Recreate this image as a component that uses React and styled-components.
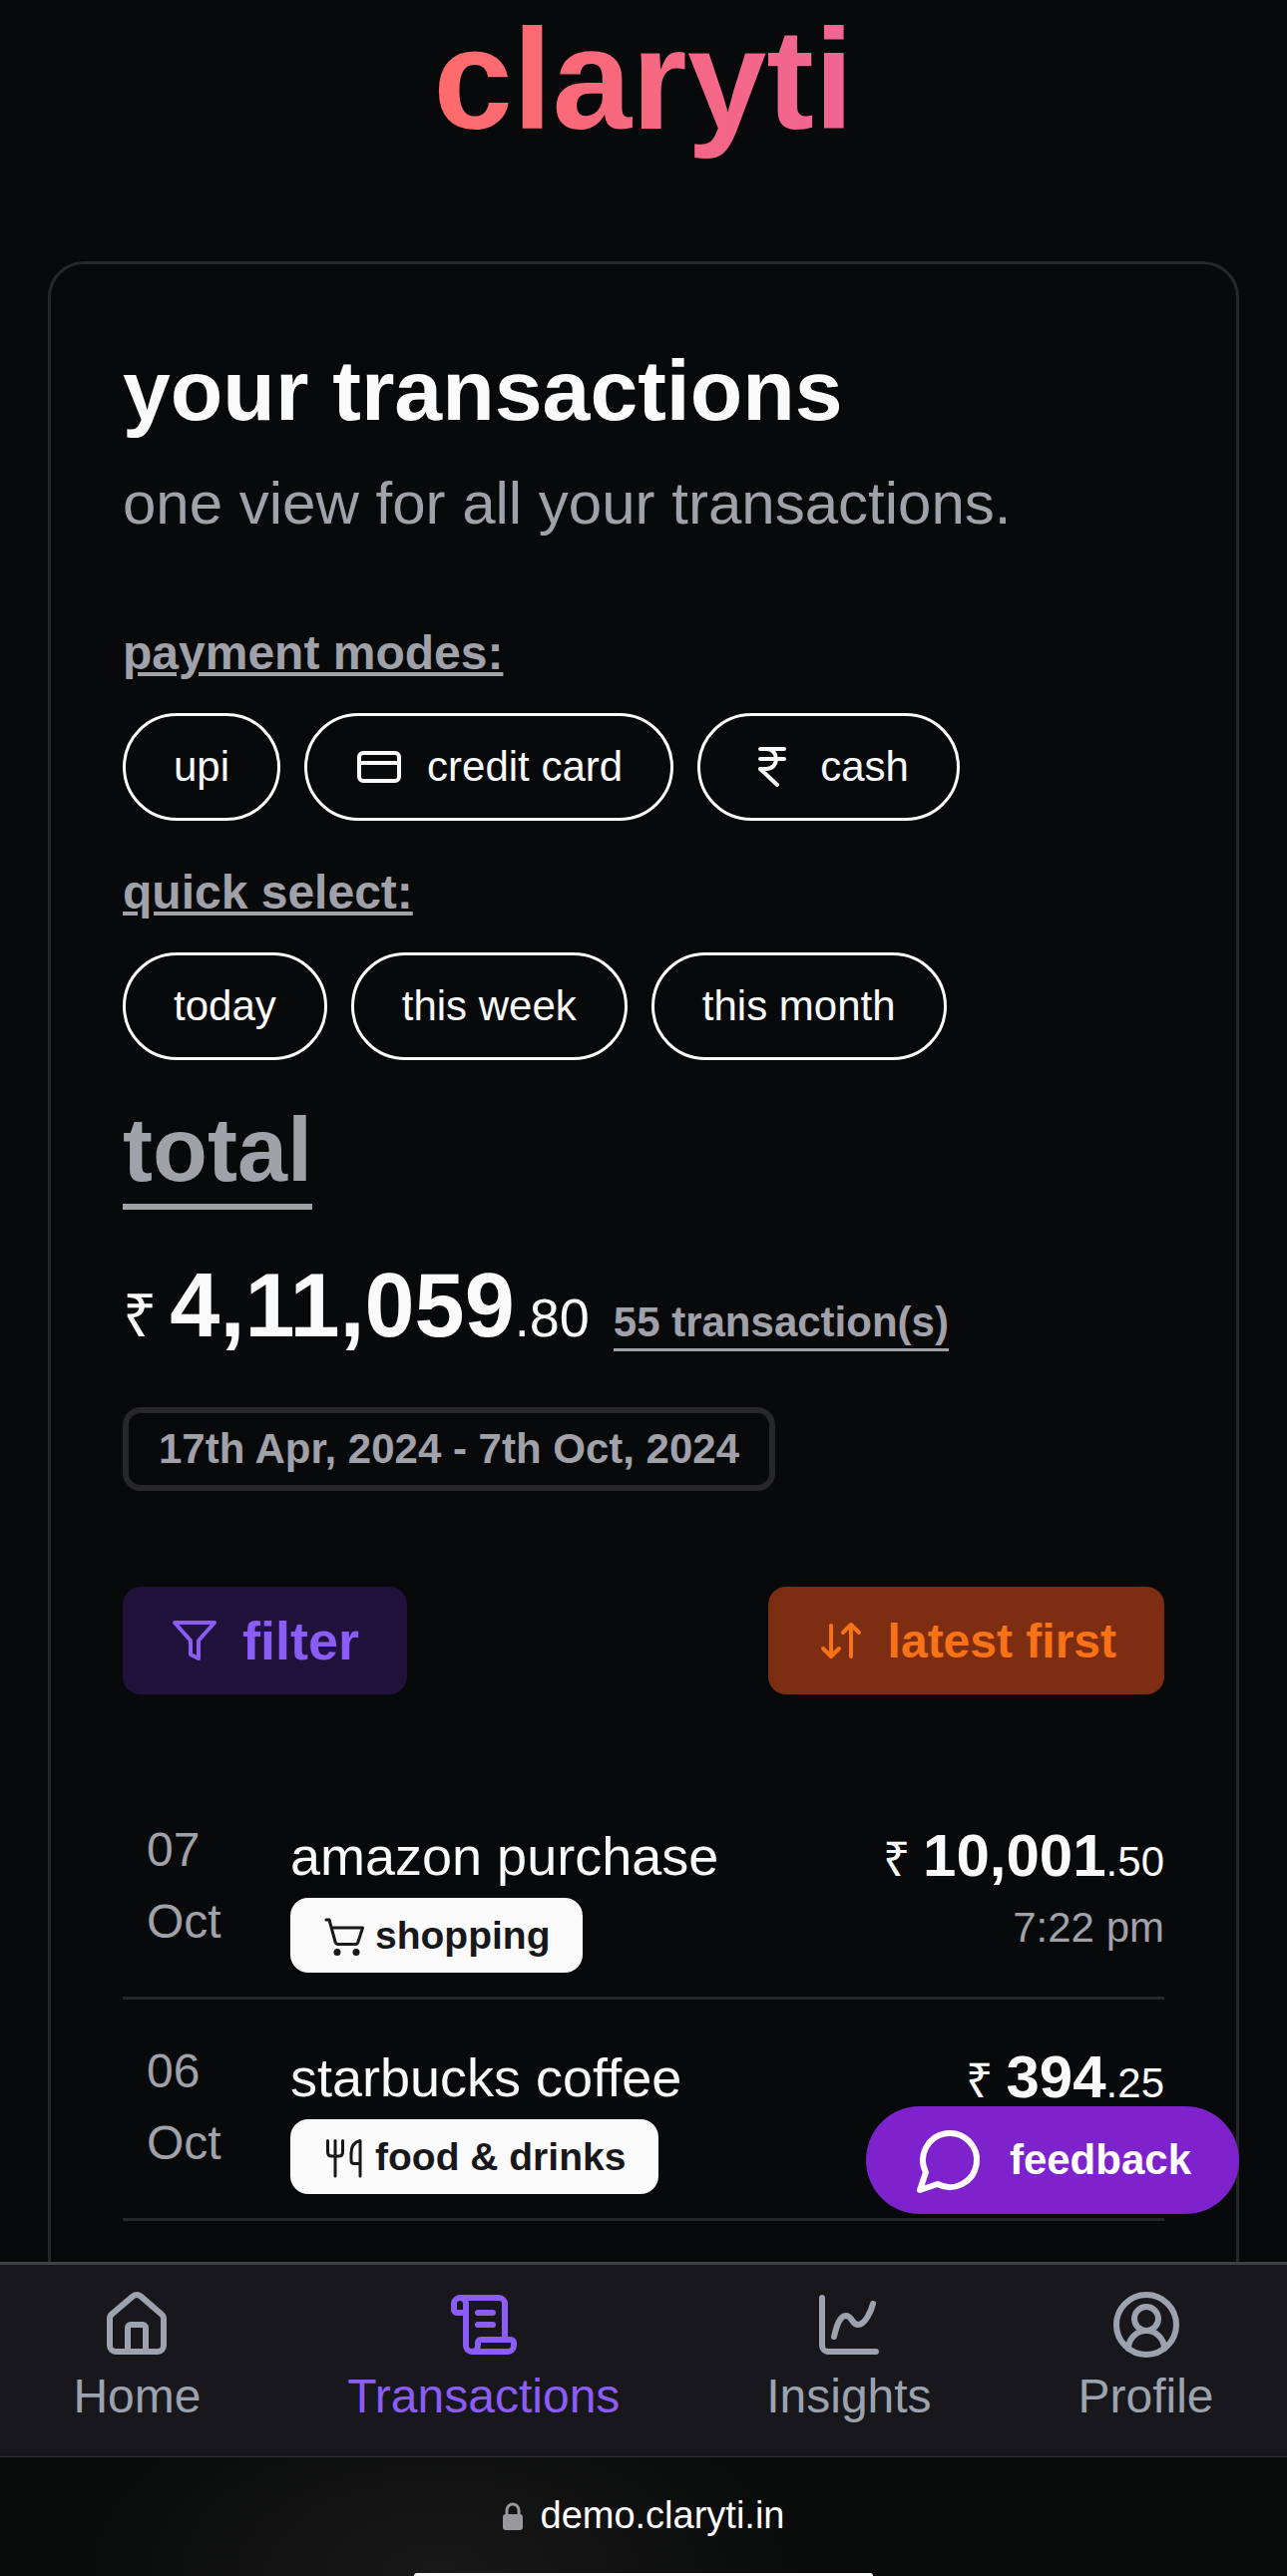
import styled, { createGlobalStyle } from "styled-components";
import {
  ChartSpline,
  CircleUserRound,
  CreditCard,
  House,
  IndianRupee,
  ScrollText,
} from "lucide-react";

const GlobalStyle = createGlobalStyle`
  *,
  *::before,
  *::after {
    box-sizing: border-box;
  }
  body {
    margin: 0;
    background-color: #07090a;
    color: #fafafa;
    font-family: "Liberation Sans", Arial, sans-serif;
  }
  h1,
  h2,
  h3,
  p,
  ul {
    margin: 0;
    padding: 0;
  }
  button {
    font-family: inherit;
    cursor: pointer;
  }
`;

const Screen = styled.div`
  display: flex;
  flex-direction: column;
  height: 100vh;
`;

const Main = styled.main`
  flex: 1;
  min-height: 0;
  overflow: hidden;
  padding: 0 48px;
`;

const Logo = styled.h1`
  width: fit-content;
  margin: 0 auto 102px;
  font-size: 143px;
  line-height: 160px;
  color: transparent;
  background-image: linear-gradient(to right, #ff6b6b, #f06595);
  background-clip: text;
`;

const Card = styled.section`
  padding: 72px;
  border: 3px solid #27272a;
  border-radius: 36px;
`;

const Title = styled.h2`
  font-size: 86px;
  line-height: 108px;
`;

const Subtitle = styled.p`
  margin: 18px 0 72px;
  color: #a1a1aa;
  font-size: 60px;
  line-height: 84px;
`;

const GroupLabel = styled.h3`
  margin-bottom: 24px;
  color: #a1a1aa;
  font-size: 48px;
  line-height: 72px;
  text-decoration: underline;
`;

const Pills = styled.div`
  display: flex;
  flex-wrap: wrap;
  gap: 24px;
  margin-bottom: 36px;
`;

const Pill = styled.button`
  display: flex;
  align-items: center;
  gap: 24px;
  height: 108px;
  padding: 0 48px;
  border: 3px solid #ffffff;
  border-radius: 54px;
  background: none;
  color: #fafafa;
  font-size: 42px;
  line-height: 60px;
`;

const TotalLabel = styled.h3`
  width: fit-content;
  border-bottom: 6px solid #a1a1aa;
  color: #a1a1aa;
  font-size: 90px;
  line-height: 108px;
`;

const Total = styled.p`
  margin: 42px 0 48px;
  font-size: 90px;
  font-weight: bold;
  line-height: 108px;
`;

/* currency sign and paise sit on the baseline of the big number */
const Small = styled.span`
  font-size: ${({ $size }) => $size};
  font-weight: normal;
  line-height: 1;
`;

const Count = styled.span`
  margin-left: 24px;
  padding-bottom: 3px;
  border-bottom: 3px solid #a1a1aa;
  color: #a1a1aa;
  font-size: 42px;
  line-height: 1;
`;

const DateRange = styled.div`
  width: fit-content;
  padding: 6px 30px;
  border: 6px solid #27272a;
  border-radius: 18px;
  color: #a1a1aa;
  font-size: 42px;
  font-weight: bold;
  line-height: 60px;
`;

const Actions = styled.div`
  display: flex;
  justify-content: space-between;
  margin: 96px 0 84px;
`;

const Action = styled.button`
  display: flex;
  align-items: center;
  gap: 24px;
  height: 108px;
  padding: 0 48px;
  border: none;
  border-radius: 18px;
  background-color: ${({ $bg }) => $bg};
  color: ${({ $color }) => $color};
  font-size: ${({ $size }) => $size};
  font-weight: bold;
`;

const List = styled.ul`
  list-style: none;
`;

const Row = styled.li`
  display: flex;
  padding: 36px 0 24px;
  border-bottom: 3px solid #27272a;
`;

const Day = styled.div`
  width: 168px;
  padding-left: 24px;
  color: #a1a1aa;
  font-size: 48px;
  line-height: 72px;
`;

const Details = styled.div`
  flex: 1;
`;

const Name = styled.div`
  font-size: 54px;
  line-height: 84px;
`;

const Tag = styled.div`
  display: flex;
  align-items: center;
  gap: 10px;
  width: fit-content;
  padding: 9px 33px;
  border-radius: 18px;
  background-color: #fafafa;
  color: #18181b;
  font-size: 39px;
  font-weight: bold;
  line-height: 57px;
`;

const Amount = styled.div`
  font-size: 60px;
  font-weight: bold;
  line-height: 84px;
  text-align: right;
`;

const Time = styled.div`
  color: #a1a1aa;
  font-size: 42px;
  font-weight: normal;
  line-height: 60px;
`;

const Feedback = styled.button`
  position: fixed;
  right: 48px;
  bottom: 363px;
  display: flex;
  align-items: center;
  gap: 24px;
  height: 108px;
  padding: 0 48px;
  border: none;
  border-radius: 54px;
  background-color: #7e22ce;
  color: #ffffff;
  font-size: 42px;
  font-weight: bold;
  line-height: 60px;
`;

const Nav = styled.nav`
  display: flex;
  justify-content: space-around;
  padding: 24px 0;
  border-top: 3px solid #3f3f46;
  background-color: #17171c;
`;

const NavLink = styled.a`
  display: flex;
  flex-direction: column;
  align-items: center;
  color: ${({ $active }) => ($active ? "#8b5cf6" : "#9ca3af")};
  font-size: 48px;
  line-height: 72px;
  text-decoration: none;
`;

const AddressBar = styled.footer`
  display: flex;
  flex-direction: column;
  align-items: center;
  justify-content: space-between;
  height: 120px;
  padding-top: 30px;
  border-top: 1px solid #303032;
  background: radial-gradient(
      ellipse 360px 200px at 34% 100%,
      #191919,
      transparent
    ),
    #0a0b0b;
`;

const Address = styled.div`
  display: flex;
  align-items: center;
  gap: 18px;
  color: #ffffff;
  font-size: 38px;
  line-height: 57px;
`;

const HomeIndicator = styled.div`
  width: 460px;
  height: 3px;
  border-radius: 6px 6px 0 0;
  background-color: #ffffff;
`;

const FilterIcon = () => (
  <svg width="48" height="48" viewBox="0 0 48 48" fill="none" aria-hidden="true">
    <path
      d="M4 6h40L28 24v18l-8-4V24L4 6z"
      stroke="currentColor"
      strokeWidth="4"
      strokeLinejoin="round"
    />
  </svg>
);

const SortIcon = () => (
  <svg width="48" height="48" viewBox="0 0 48 48" fill="none" aria-hidden="true">
    <path
      d="M15 9v31M7 32l8 8 8-8M35 40V9M27 16l8-8 8 8"
      stroke="currentColor"
      strokeWidth="4"
      strokeLinecap="round"
      strokeLinejoin="round"
    />
  </svg>
);

const CartIcon = () => (
  <svg width="42" height="42" viewBox="0 0 42 42" fill="none" aria-hidden="true">
    <path
      d="M3 5h3l6 22q.5 2.500 3 2.500h17q2.500 0 3-2.500L39.500 13H9"
      stroke="currentColor"
      strokeWidth="3"
      strokeLinecap="round"
      strokeLinejoin="round"
    />
    <circle cx="14" cy="37.500" r="3.500" fill="currentColor" />
    <circle cx="33" cy="37.500" r="3.500" fill="currentColor" />
  </svg>
);

const CutleryIcon = () => (
  <svg width="42" height="42" viewBox="0 0 42 42" fill="none" aria-hidden="true">
    <path
      d="M4.500 4.500V16q0 4 4 4h7q4 0 4-4V4.500M12 4.500V40M37 40V4.500q-9 2-9 13v7q0 3 3 3h6"
      stroke="currentColor"
      strokeWidth="3"
      strokeLinecap="round"
      strokeLinejoin="round"
    />
  </svg>
);

const ChatIcon = () => (
  <svg width="72" height="72" viewBox="0 0 24 24" fill="none" aria-hidden="true">
    <path
      d="M7.9 20A9 9 0 1 0 4 16.1L2 22Z"
      stroke="currentColor"
      strokeWidth="2"
      strokeLinecap="round"
      strokeLinejoin="round"
    />
  </svg>
);

const LockIcon = () => (
  <svg width="20" height="28" viewBox="0 0 20 28" fill="none" aria-hidden="true">
    <path d="M4 14V8a6 6 0 0 1 12 0v6" stroke="#98989d" strokeWidth="3" />
    <rect y="12" width="20" height="16" rx="3" fill="#98989d" />
  </svg>
);

const transactions = [
  {
    day: "07",
    month: "Oct",
    name: "amazon purchase",
    tag: "shopping",
    icon: <CartIcon />,
    whole: "10,001",
    paise: ".50",
    time: "7:22 pm",
  },
  {
    day: "06",
    month: "Oct",
    name: "starbucks coffee",
    tag: "food & drinks",
    icon: <CutleryIcon />,
    whole: "394",
    paise: ".25",
  },
];

const links = [
  { label: "Home", Icon: House },
  { label: "Transactions", Icon: ScrollText, active: true },
  { label: "Insights", Icon: ChartSpline },
  { label: "Profile", Icon: CircleUserRound },
];

function App() {
  return (
    <>
      <GlobalStyle />
      <Screen>
        <Main>
          <Logo>claryti</Logo>
          <Card>
            <Title>your transactions</Title>
            <Subtitle>one view for all your transactions.</Subtitle>

            <GroupLabel>payment modes:</GroupLabel>
            <Pills>
              <Pill>upi</Pill>
              <Pill>
                <CreditCard size={48} />
                credit card
              </Pill>
              <Pill>
                <IndianRupee size={48} />
                cash
              </Pill>
            </Pills>
            <GroupLabel>quick select:</GroupLabel>
            <Pills>
              <Pill>today</Pill>
              <Pill>this week</Pill>
              <Pill>this month</Pill>
            </Pills>

            <TotalLabel>total</TotalLabel>
            <Total>
              <Small $size="60px">₹</Small>
              <Small $size="48px"> </Small>
              4,11,059
              <Small $size="54px">.80</Small>
              <Count>55 transaction(s)</Count>
            </Total>
            <DateRange>17th Apr, 2024 - 7th Oct, 2024</DateRange>

            <Actions>
              <Action $bg="#21123b" $color="#8b5cf6" $size="54px">
                <FilterIcon />
                filter
              </Action>
              <Action $bg="#7c2d12" $color="#f97316" $size="48px">
                <SortIcon />
                latest first
              </Action>
            </Actions>

            <List>
              {transactions.map((item) => (
                <Row key={item.name}>
                  <Day>
                    {item.day}
                    <br />
                    {item.month}
                  </Day>
                  <Details>
                    <Name>{item.name}</Name>
                    <Tag>
                      {item.icon}
                      {item.tag}
                    </Tag>
                  </Details>
                  <Amount>
                    <Small $size="48px">₹ </Small>
                    {item.whole}
                    <Small $size="42px">{item.paise}</Small>
                    {item.time && <Time>{item.time}</Time>}
                  </Amount>
                </Row>
              ))}
            </List>
          </Card>
        </Main>
        <Nav>
          {links.map(({ label, Icon, active }) => (
            <NavLink key={label} href="#" $active={active}>
              <Icon size={72} />
              {label}
            </NavLink>
          ))}
        </Nav>
        <AddressBar>
          <Address>
            <LockIcon />
            demo.claryti.in
          </Address>
          <HomeIndicator />
        </AddressBar>
      </Screen>
      <Feedback>
        <ChatIcon />
        feedback
      </Feedback>
    </>
  );
}

export default App;
